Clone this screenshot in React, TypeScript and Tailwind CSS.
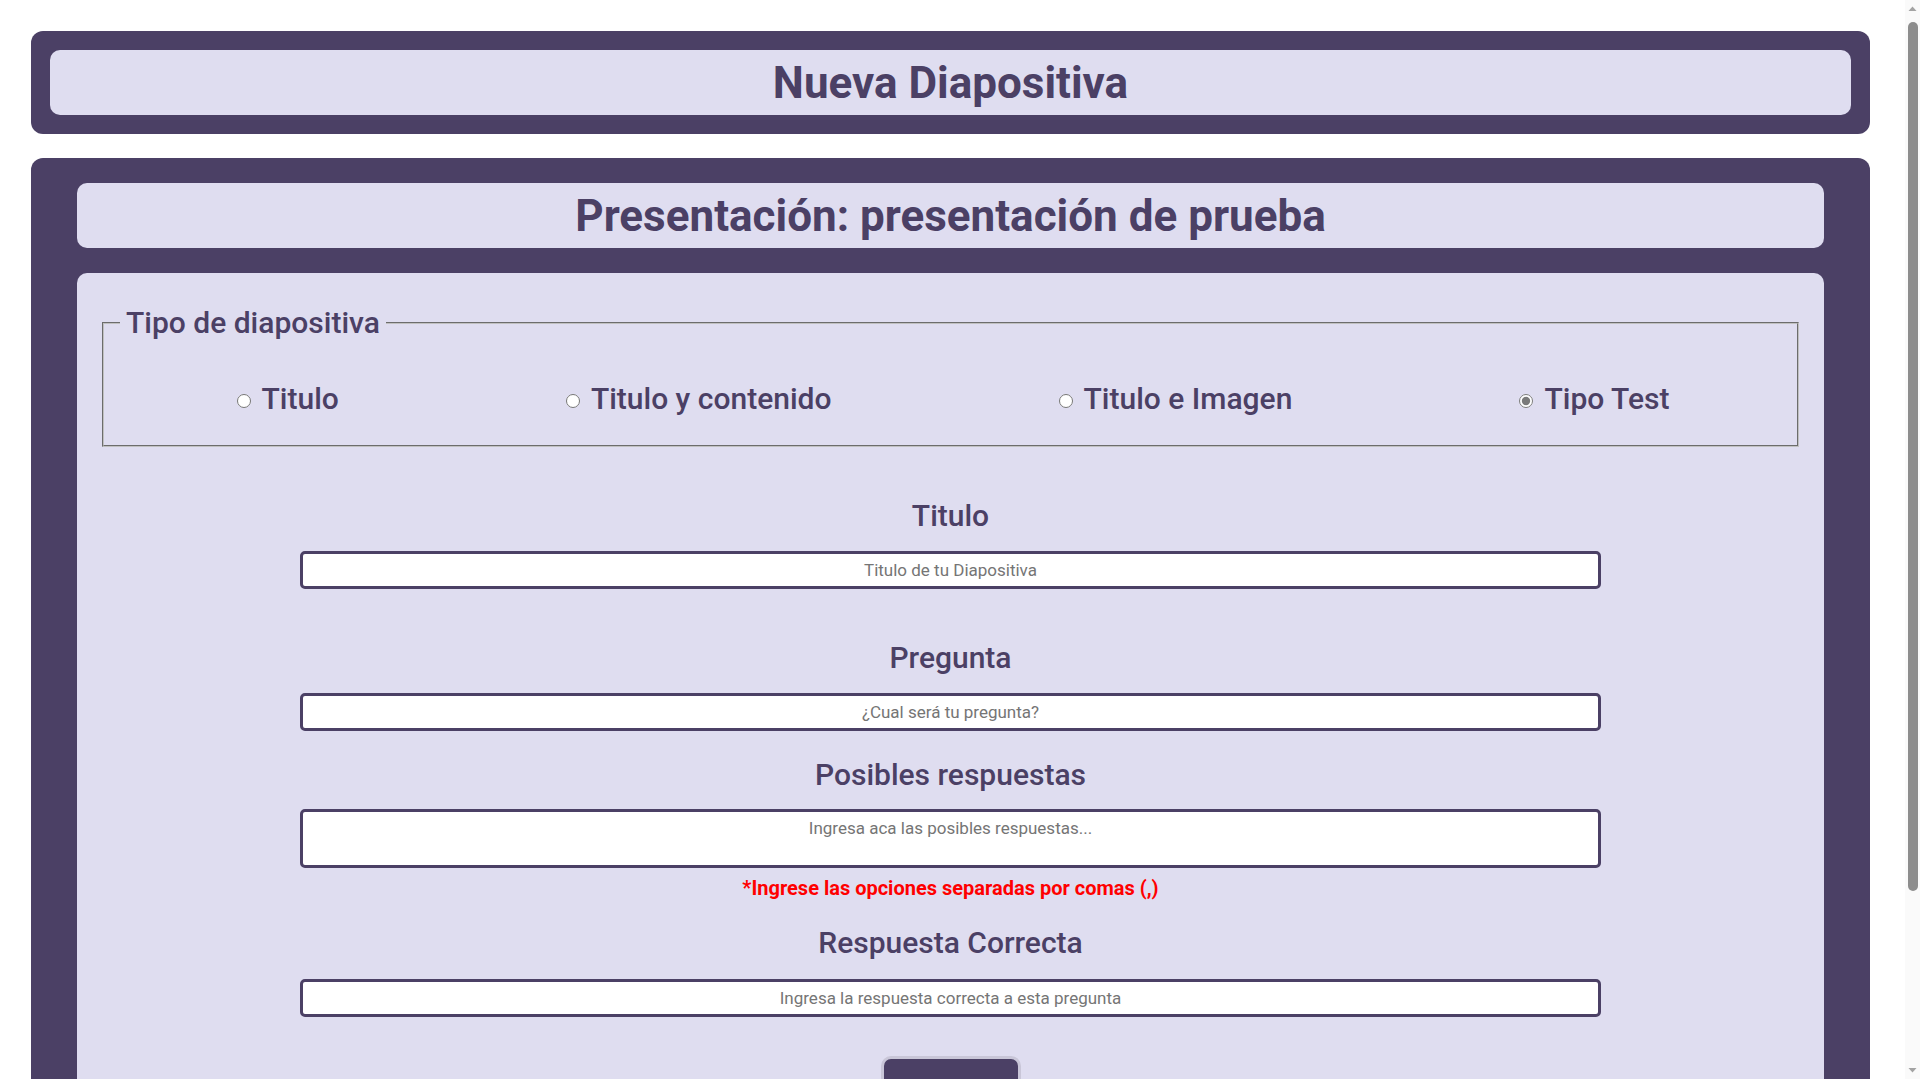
import { useState } from 'react';

const tipos = [
  { id: 'titulo', label: 'Titulo' },
  { id: 'contenido', label: 'Titulo y contenido' },
  { id: 'imagen', label: 'Titulo e Imagen' },
  { id: 'test', label: 'Tipo Test' },
];

function FieldLabel({ children, className = '' }: { children: React.ReactNode; className?: string }) {
  return (
    <label className={`block text-center text-[30px] leading-[35px] font-medium text-[#4b4065] ${className}`}>
      {children}
    </label>
  );
}

// barra de desplazamiento como en la captura
function ScrollBar() {
  return (
    <div className="flex w-[15px] shrink-0 flex-col items-center bg-[#fafafa]">
      <svg width="15" height="17" viewBox="0 0 15 17" className="shrink-0">
        <path d="M3.5 11 L7.5 6.5 L11.5 11 Z" fill="#a3a3a3" />
      </svg>
      <div className="mt-[5px] h-[869px] w-[10px] rounded-full bg-[#8d8d8d]" />
      <div className="flex-1" />
      <svg width="15" height="17" viewBox="0 0 15 17" className="shrink-0">
        <path d="M3.5 6 L7.5 10.5 L11.5 6 Z" fill="#a3a3a3" />
      </svg>
    </div>
  );
}

export default function App() {
  const [tipo, setTipo] = useState('test');

  return (
    <div className="flex h-screen bg-white font-['Roboto','Liberation_Sans',sans-serif] text-[#4b4065]">
      <div className="flex-1 overflow-y-auto [scrollbar-width:none]">
        <div className="pt-[31px] pb-[31px]">
          {/* cabecera */}
          <header className="ml-[31px] mr-[35px] rounded-[12px] bg-[#4b4065] p-[19px]">
            <div className="rounded-[10px] bg-[#dfddf0] pt-[7px] pb-[5px]">
              <h1 className="text-center text-[44px] leading-[53px] font-bold">Nueva Diapositiva</h1>
            </div>
          </header>

          <main className="ml-[31px] mr-[35px] mt-[24px] rounded-[12px] bg-[#4b4065] px-[46px] pt-[25px] pb-[46px]">
            <div className="rounded-[10px] bg-[#dfddf0] pt-[7px] pb-[5px]">
              <h2 className="text-center text-[44px] leading-[53px] font-bold">
                Presentación: presentación de prueba
              </h2>
            </div>

            <form className="mt-[25px] rounded-[10px] bg-[#dfddf0] px-[25px] pt-[32px] pb-[60px]">
              {/* tipo de diapositiva */}
              <fieldset className="border-2 border-[#c0c0c0] [border-style:groove] pl-[19px] pr-[14px] pt-[41px] pb-[29px]">
                <legend className="-ml-[3px] px-[6px] text-[30px] leading-[35px] font-medium">Tipo de diapositiva</legend>
                <div className="flex justify-around">
                  {tipos.map((t) => (
                    <label key={t.id} className="flex items-center gap-[11px] text-[30px] leading-[35px] font-medium cursor-pointer">
                      <input
                        type="radio"
                        name="tipo"
                        checked={tipo === t.id}
                        onChange={() => setTipo(t.id)}
                        className="mt-[5px] h-[14px] w-[14px] accent-[#7a7a7a]"
                      />
                      {t.label}
                    </label>
                  ))}
                </div>
              </fieldset>

              <div className="mx-auto w-[1301px]">
                <FieldLabel className="mt-[51px]">Titulo</FieldLabel>
                <input
                  type="text"
                  placeholder="Titulo de tu Diapositiva"
                  className="mt-[18px] block h-[38px] w-full rounded-[5px] border-[3px] border-[#4b4065] bg-white text-center text-[17px] text-[#333] placeholder:text-[#757575] outline-none"
                />

                <FieldLabel className="mt-[51px]">Pregunta</FieldLabel>
                <input
                  type="text"
                  placeholder="¿Cual será tu pregunta?"
                  className="mt-[18px] block h-[38px] w-full rounded-[5px] border-[3px] border-[#4b4065] bg-white text-center text-[17px] text-[#333] placeholder:text-[#757575] outline-none"
                />

                <FieldLabel className="mt-[26px]">Posibles respuestas</FieldLabel>
                <textarea
                  placeholder="Ingresa aca las posibles respuestas..."
                  className="mt-[17px] block h-[59px] w-full resize-none rounded-[5px] border-[3px] border-[#4b4065] bg-white pt-[6px] text-center text-[17px] leading-[20px] text-[#333] placeholder:text-[#757575] outline-none"
                />
                <p className="mt-[9px] text-center text-[20px] leading-[23px] font-bold text-[#ff0000]">
                  *Ingrese las opciones separadas por comas (,)
                </p>

                <FieldLabel className="mt-[25px]">Respuesta Correcta</FieldLabel>
                <input
                  type="text"
                  placeholder="Ingresa la respuesta correcta a esta pregunta"
                  className="mt-[19px] block h-[38px] w-full rounded-[5px] border-[3px] border-[#4b4065] bg-white text-center text-[17px] text-[#333] placeholder:text-[#757575] outline-none"
                />

                <div className="mt-[39px] flex justify-center">
                  <button
                    type="submit"
                    aria-label="Guardar"
                    className="h-[64px] w-[140px] rounded-[10px] border-[3px] border-[#c9c6d8] bg-[#4b4065]"
                  />
                </div>
              </div>
            </form>
          </main>
        </div>
      </div>
      <ScrollBar />
    </div>
  );
}
